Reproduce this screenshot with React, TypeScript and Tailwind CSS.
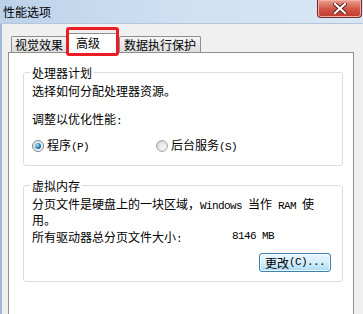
import React from 'react'

const L = ({ children }: { children: React.ReactNode }) => (
  <span className="font-['Liberation_Mono',monospace] text-[11px] tracking-[-0.6px]">{children}</span>
)

const Radio = ({ checked }: { checked?: boolean }) => (
  <span
    className={
      checked
        ? 'flex h-[12px] w-[12px] items-center justify-center rounded-full border border-[#7e8a94] bg-gradient-to-br from-[#dcdcdc] to-[#fbfbfb]'
        : 'flex h-[12px] w-[12px] items-center justify-center rounded-full border border-[#a8a8a8] bg-gradient-to-br from-[#cfcfcf] to-[#f6f6f6]'
    }
  >
    {checked ? (
      <span className="h-[6px] w-[6px] rounded-full bg-[radial-gradient(circle_at_35%_35%,#a9e4ff_0%,#2a7cb4_55%,#0d3f66_100%)]" />
    ) : (
      <span className="h-[6px] w-[6px] rounded-full bg-gradient-to-br from-[#e4e4e4] to-[#f8f8f8]" />
    )}
  </span>
)

export default function App() {
  return (
    <div className="flex h-[314px] w-[363px] flex-col overflow-hidden bg-[#f0f0f0] font-['Noto_Sans_CJK_SC',sans-serif] text-[12px] leading-[13px] text-black">
      {/* title bar */}
      <div className="flex h-[24px] shrink-0 items-start justify-between border-b border-[#b4c6d9] bg-gradient-to-r from-[#bcd2ea] via-[#cfe0f2] to-[#d9e7f5]">
        <div className="self-center pl-[3px] text-[12px] leading-[13px]">性能选项</div>
        <div className="mr-[1px] flex h-[18px] w-[45px] items-center justify-center rounded-b-[4px] border border-t-0 border-[#7a2a24] bg-gradient-to-b from-[#e9a195] via-[#d2594a] to-[#c0392b] shadow-[inset_0_0_0_1px_#f0b0a6]">
          <svg width="14" height="11" viewBox="0 0 14 11">
            <path d="M2 1 L12 10 M12 1 L2 10" stroke="#5a1a14" strokeWidth="4" strokeLinecap="square" />
            <path d="M2 1 L12 10 M12 1 L2 10" stroke="#ffffff" strokeWidth="2.2" strokeLinecap="square" />
          </svg>
        </div>
      </div>

      {/* body */}
      <div className="flex flex-1 flex-col border-l-2 border-[#9fb9d4] pl-[6px] pt-[9px]">
        {/* tabs */}
        <div className="relative z-10 -mb-px flex items-end pl-[3px]">
          <div className="mb-px flex h-[16px] items-center rounded-t-[2px] border border-b-0 border-[#8e8f8f] bg-gradient-to-b from-[#f4f4f4] to-[#dddddd] px-[3px]">
            视觉效果
          </div>
          <div className="relative flex h-[20px] w-[51px] items-center rounded-t-[2px] border border-b-0 border-[#8e8f8f] bg-white pb-[3px] pl-[8px]">
            高级
            <div className="absolute -left-[2px] -top-[7px] h-[29px] w-[53px] rounded-[3px] border-[3px] border-[#ec1c24]" />
          </div>
          <div className="mb-px ml-[1px] flex h-[16px] items-center rounded-t-[2px] border border-b-0 border-[#8e8f8f] bg-gradient-to-b from-[#f4f4f4] to-[#dddddd] px-[4px]">
            数据执行保护
          </div>
        </div>

        {/* panel */}
        <div className="flex-1 w-[346px] border border-b-0 border-[#8e8f8f] bg-white pl-[14px] pt-[13px]">
          <fieldset className="w-[320px] rounded-[3px] border border-[#d5dfe5] px-[8px] pb-[11px]">
            <legend className="-ml-[2px] px-[2px] leading-[13px]">处理器计划</legend>
            <div className="mt-[5px]">选择如何分配处理器资源。</div>
            <div className="mt-[15px]">
              调整以优化性能<L>:</L>
            </div>
            <div className="mt-[10px] flex items-center">
              <div className="flex w-[124px] items-center">
                <Radio checked />
                <span className="ml-[3px]">
                  程序<L>(P)</L>
                </span>
              </div>
              <div className="flex items-center">
                <Radio />
                <span className="ml-[3px]">
                  后台服务<L>(S)</L>
                </span>
              </div>
            </div>
          </fieldset>

          <fieldset className="mt-[13px] w-[320px] rounded-[3px] border border-[#d5dfe5] px-[8px] pb-[9px]">
            <legend className="-ml-[2px] px-[2px] leading-[13px]">虚拟内存</legend>
            <div className="mt-[5px]">
              分页文件是硬盘上的一块区域，<L>Windows </L>当作<L> RAM </L>使
              <br />
              用。
            </div>
            <div className="mt-[4px] flex">
              <div className="w-[200px]">
                所有驱动器总分页文件大小<L>:</L>
              </div>
              <L>8146 MB</L>
            </div>
            <div className="mt-[7px] flex justify-end">
              <button className="mr-[3px] flex h-[19px] w-[72px] items-center justify-center rounded-[3px] border border-[#3c7fb1] bg-gradient-to-b from-[#e9f6fd] via-[#d3eefb] to-[#a9dbf6] text-[12px] leading-[13px] shadow-[inset_0_0_0_1px_#f4fbff]">
                更改<L>(C)...</L>
              </button>
            </div>
          </fieldset>
        </div>
      </div>
    </div>
  )
}
